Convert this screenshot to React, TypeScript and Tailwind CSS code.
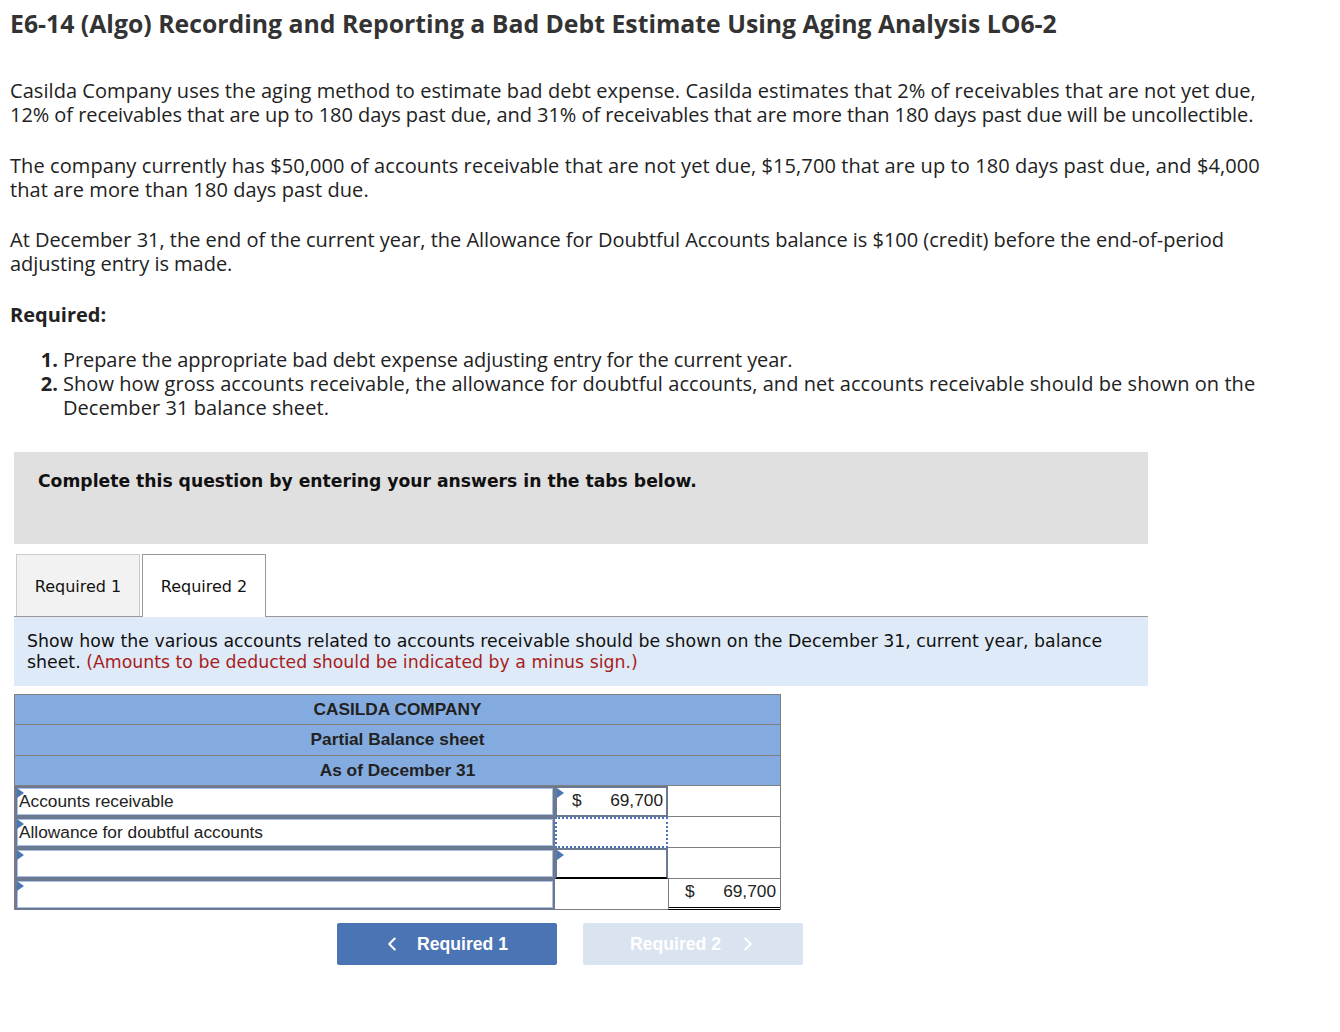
import React from 'react';
import { ChevronLeft, ChevronRight } from 'lucide-react';

const body = "font-['Open_Sans',sans-serif]";
const verdana = "font-['DejaVu_Sans',sans-serif]";
const arial = "font-['Liberation_Sans',Arial,sans-serif]";

const Marker = () => (
    <span className="absolute left-0 top-0 h-0 w-0 border-y-[5px] border-l-[7px] border-y-transparent border-l-[#4a76b5]"></span>
);

const HeaderRow = ({ text }: { text: string }) => (
    <div className="col-span-3 flex h-[30.5px] items-center justify-center border-b border-[#7f7f7f] bg-[#84abdf] text-[17.3px] font-bold text-[#222]">
        {text}
    </div>
);

const InputCell = ({ text }: { text?: string }) => (
    <div className="relative h-[31px] border-2 border-[#6b7a90]">
        <div className="h-full border border-[#a9c0e4] bg-white pl-[1px] leading-[24px]">{text}</div>
        <Marker />
    </div>
);

export default function App() {
    return (
        <div className={`${body} h-[1032px] w-[1340px] bg-white text-[#222]`}>
            <div className="pl-[10px] pt-[7px]">
                <h1 className="text-[24.8px] font-bold leading-[32px] text-[#333]">
                    E6-14 (Algo) Recording and Reporting a Bad Debt Estimate Using Aging Analysis LO6-2
                </h1>

                <div className="mt-[40px] flex w-[1300px] flex-col gap-[26px] text-[20px] leading-[24.4px]">
                    <p>
                        <span className="tracking-[0.06px]">Casilda Company uses the aging method to estimate bad debt expense. Casilda estimates that 2% of receivables that are not yet due,</span><br />
                        <span className="tracking-[-0.06px]">12% of receivables that are up to 180 days past due, and 31% of receivables that are more than 180 days past due will be uncollectible.</span>
                    </p>
                    <p className="tracking-[0.09px]">
                        The company currently has $50,000 of accounts receivable that are not yet due, $15,700 that are up to 180 days past due, and $4,000<br />
                        that are more than 180 days past due.
                    </p>
                    <p className="-mt-[1px] tracking-[-0.02px]">
                        At December 31, the end of the current year, the Allowance for Doubtful Accounts balance is $100 (credit) before the end-of-period<br />
                        adjusting entry is made.
                    </p>
                    <p className="mt-[1px] font-bold">Required:</p>
                </div>

                <ol className="mt-[20px] text-[20px] leading-[24px]">
                    <li className="flex pl-[30px]"><b className="w-[23px] pr-[5px] text-right">1.</b><span className="tracking-[-0.08px]">Prepare the appropriate bad debt expense adjusting entry for the current year.</span></li>
                    <li className="flex pl-[30px]"><b className="w-[23px] pr-[5px] text-right">2.</b><span className="tracking-[0.06px]">Show how gross accounts receivable, the allowance for doubtful accounts, and net accounts receivable should be shown on the<br />December 31 balance sheet.</span></li>
                </ol>
            </div>

            <div className="ml-[14px] mt-[32px] w-[1134px]">
                <div className={`${verdana} h-[92px] bg-[#e0e0e0] pl-[24px] pt-[17px] text-[17.2px] font-bold leading-[24px] text-[#111]`}>
                    Complete this question by entering your answers in the tabs below.
                </div>

                <div className={`${verdana} mt-[10px] flex items-start gap-[2px] border-b border-[#999] pl-[2px] text-[16px] text-[#111]`}>
                    <div className="flex h-[62px] w-[124px] items-center justify-center border border-b-0 border-[#ccc] bg-[#f2f2f2] pt-[4px]">Required 1</div>
                    <div className="-mb-px flex h-[63px] w-[124px] items-center justify-center border border-b-0 border-[#999] bg-white pt-[3px]">Required 2</div>
                </div>

                <div className={`${verdana} h-[69px] bg-[#deeaf7] pl-[13px] pt-[14px] text-[17.33px] leading-[21px] text-[#111]`}>
                    Show how the various accounts related to accounts receivable should be shown on the December 31, current year, balance<br />
                    sheet. <span className="text-[#a81c1c]">(Amounts to be deducted should be indicated by a minus sign.)</span>
                </div>

                <div className={`${arial} mt-[8px] grid w-[767px] grid-cols-[540px_113px_112px] border-x border-t border-[#7f7f7f] text-[17.3px] text-[#222]`}>
                    <HeaderRow text="CASILDA COMPANY" />
                    <HeaderRow text="Partial Balance sheet" />
                    <HeaderRow text="As of December 31" />

                    <InputCell text="Accounts receivable" />
                    <div className="relative flex h-[31px] justify-between border-2 border-[#6b7a90] bg-white pl-[15px] pr-[3px] leading-[24px]">
                        <span>$</span><span>69,700</span>
                        <Marker />
                    </div>
                    <div className="h-[31px] border-b border-[#7f7f7f]"></div>

                    <InputCell text="Allowance for doubtful accounts" />
                    <div className="h-[31px] border-2 border-dotted border-[#4a76b5] bg-white"></div>
                    <div className="h-[31px] border-b border-[#7f7f7f]"></div>

                    <InputCell />
                    <div className="relative h-[31px] border-2 border-[#6b7a90] border-b-black bg-white">
                        <Marker />
                    </div>
                    <div className="h-[31px] border-b border-[#7f7f7f]"></div>

                    <InputCell />
                    <div className="h-[31px] border-b border-[#7f7f7f]"></div>
                    <div className="flex h-[31px] justify-between border-b-[3px] border-l border-b-black border-l-[#7f7f7f] pl-[16px] pr-[4px] leading-[24px] [border-bottom-style:double]">
                        <span>$</span><span>69,700</span>
                    </div>
                </div>
            </div>

            <div className={`${arial} ml-[337px] mt-[13px] flex gap-[26px] text-[17.6px] font-bold text-white`}>
                <div className="flex h-[42px] w-[220px] items-center justify-center gap-[14px] rounded-[2px] bg-[#4a74b4] pr-[5px]">
                    <ChevronLeft size={22} strokeWidth={2.3} />
                    <span>Required 1</span>
                </div>
                <div className="flex h-[42px] w-[220px] items-center justify-center gap-[16px] rounded-[2px] bg-[#dae3f0] pl-[3px]">
                    <span>Required 2</span>
                    <ChevronRight size={22} strokeWidth={2.3} />
                </div>
            </div>
        </div>
    );
}
